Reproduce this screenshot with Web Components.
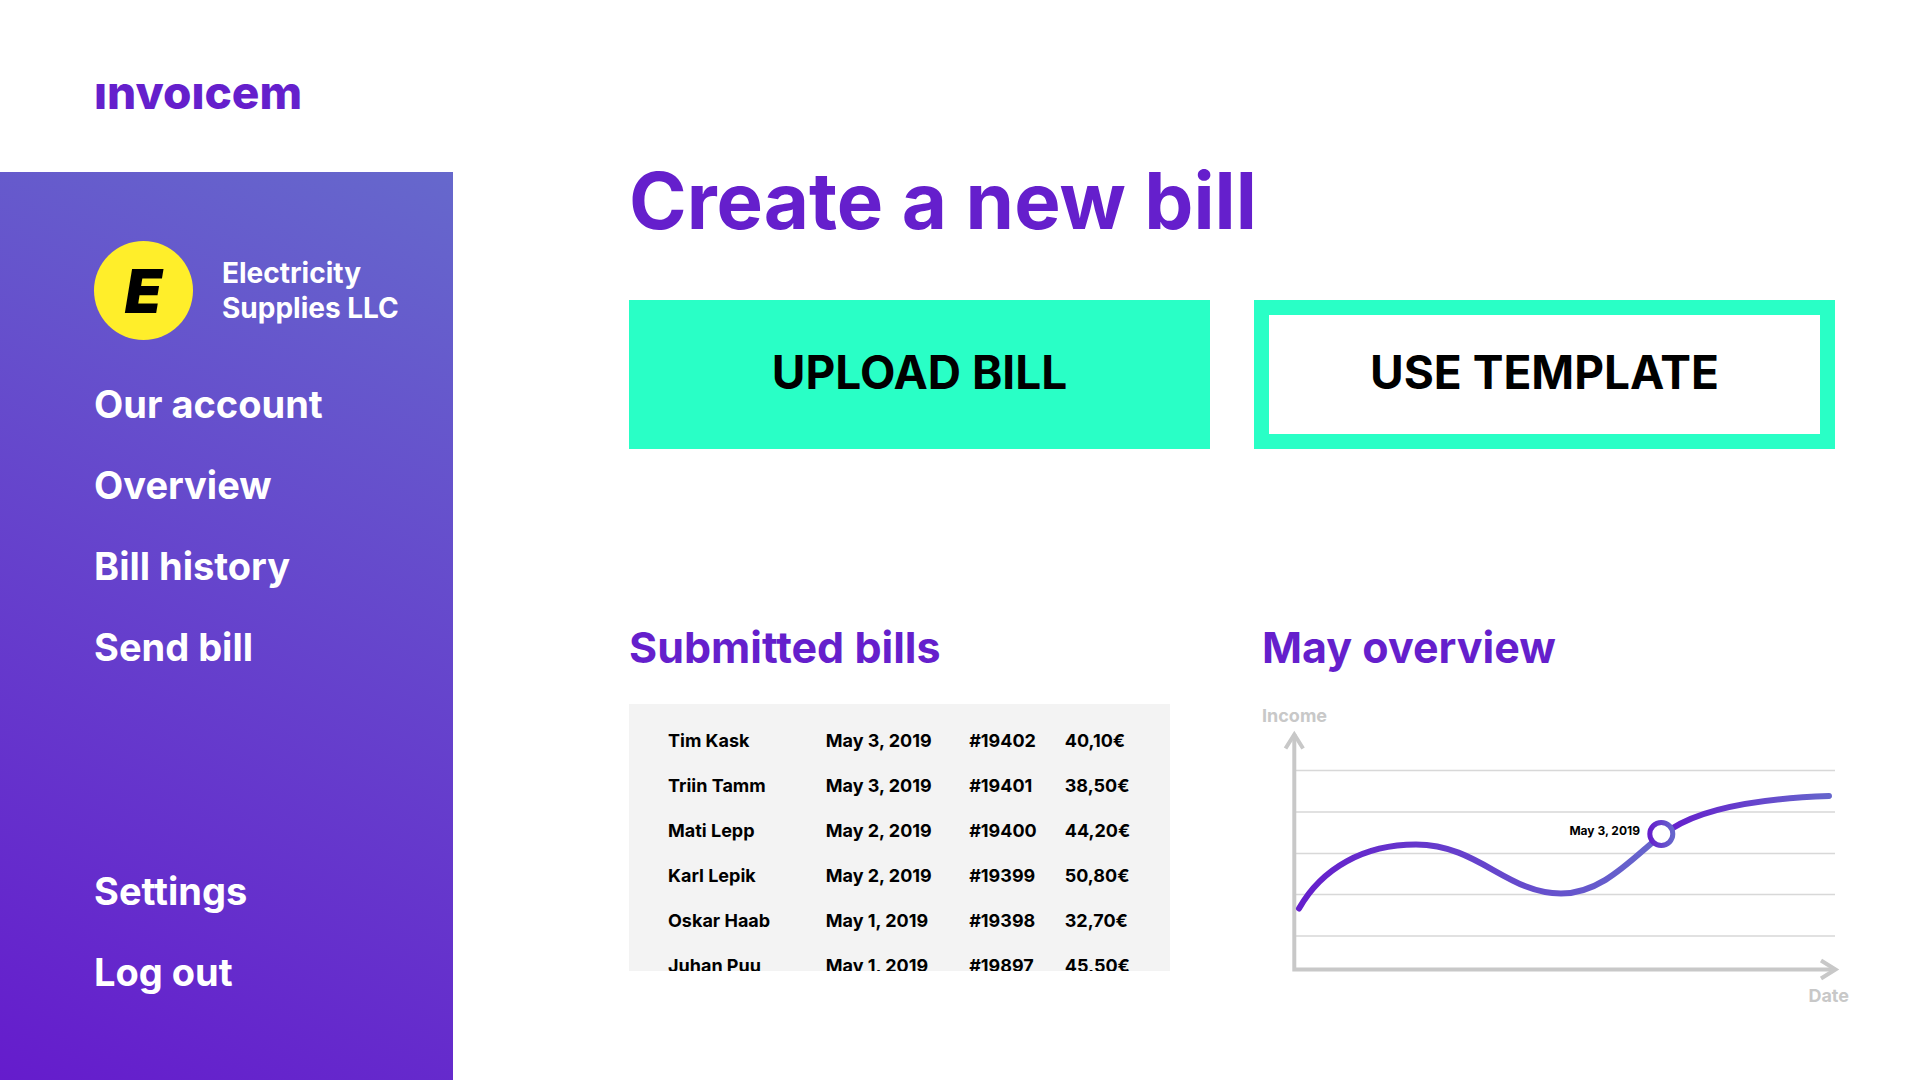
<!DOCTYPE html>
<html lang="en">
<head>
<meta charset="utf-8">
<title>invoicem</title>
<style>
  body { margin: 0; background: #fff; font-family: Inter, "Liberation Sans", sans-serif; font-weight: 700; }
</style>
</head>
<body>
<invoice-app></invoice-app>
<script>
const define = (name, html, setup) => {
  const template = document.createElement('template');
  template.innerHTML = html;
  customElements.define(name, class extends HTMLElement {
    constructor() {
      super();
      this.attachShadow({ mode: 'open' }).append(template.content.cloneNode(true));
    }
    connectedCallback() { if (setup) setup(this, this.shadowRoot); }
  });
};

define('brand-logo', `
  <style>
    :host { display: block; color: #651fcc; font-size: 46px; line-height: 56px; font-weight: 800; }
    a { color: inherit; text-decoration: none; }
  </style>
  <a href="#" aria-label="invoicem">ınvoıcem</a>`);

define('company-badge', `
  <style>
    :host { display: flex; align-items: center; gap: 29px; font-size: 28px; line-height: 35px; }
    .mark { flex: none; width: 99px; height: 99px; border-radius: 50%; background: #ffee2a; color: #000;
            display: grid; place-items: center; font-size: 60px; line-height: 60px; font-weight: 900; font-style: italic; }
  </style>
  <span class="mark"><slot name="mark"></slot></span>
  <div><slot></slot></div>`);

define('nav-item', `
  <style>
    :host { display: block; }
    a { color: inherit; text-decoration: none; font-size: 38px; line-height: 48px; white-space: nowrap; }
  </style>
  <a href="#"><slot></slot></a>`);

define('side-bar', `
  <style>
    :host { display: flex; flex-direction: column; box-sizing: border-box; padding: 69px 24px 84px 94px; color: #fff;
            background: linear-gradient(24deg, #651ccc, #6668cc); }
    nav { flex: 1; display: flex; flex-direction: column; gap: 33px; margin-top: 40px; }
    .end { margin-top: auto; }
  </style>
  <company-badge><span slot="mark">E</span>Electricity<br>Supplies LLC</company-badge>
  <nav aria-label="Main">
    <nav-item>Our account</nav-item>
    <nav-item>Overview</nav-item>
    <nav-item>Bill history</nav-item>
    <nav-item>Send bill</nav-item>
    <nav-item class="end">Settings</nav-item>
    <nav-item>Log out</nav-item>
  </nav>`);

define('action-button', `
  <style>
    :host { display: block; }
    button { display: block; width: 100%; margin: 0; padding: 28px 0 33px; border: 15px solid #29ffc6; background: #29ffc6;
             color: #000; font: inherit; font-size: 46px; line-height: 58px; white-space: nowrap; }
    :host([outline]) button { background: #fff; }
  </style>
  <button type="button"><slot></slot></button>`);

define('panel-section', `
  <style>
    :host { display: block; }
    h2 { margin: 0 0 31px; color: #651fcc; font-size: 43px; line-height: 52px; font-weight: 700; }
  </style>
  <section><h2><slot name="title"></slot></h2><slot></slot></section>`);

const bills = [
  ['Tim Kask', 'May 3, 2019', '#19402', '40,10€'],
  ['Triin Tamm', 'May 3, 2019', '#19401', '38,50€'],
  ['Mati Lepp', 'May 2, 2019', '#19400', '44,20€'],
  ['Karl Lepik', 'May 2, 2019', '#19399', '50,80€'],
  ['Oskar Haab', 'May 1, 2019', '#19398', '32,70€'],
  ['Juhan Puu', 'May 1, 2019', '#19897', '45,50€'],
];

define('bill-list', `
  <style>
    :host { display: block; box-sizing: border-box; height: 267px; overflow: hidden; padding: 14px 24px 0 39px; background: #f3f3f3; }
    table { width: 100%; table-layout: fixed; border-collapse: collapse; font-size: 18px; line-height: 45px; }
    td { padding: 0; white-space: nowrap; }
    .name { width: 33%; } .date { width: 30%; } .number { width: 20%; }
  </style>
  <table aria-label="Submitted bills">
    <colgroup><col class="name"><col class="date"><col class="number"><col></colgroup>
    <tbody></tbody>
  </table>`, (host, root) => {
  const body = root.querySelector('tbody');
  if (body.rows.length) return;
  for (const bill of bills) {
    const row = body.insertRow();
    for (const value of bill) row.insertCell().textContent = value;
  }
});

define('income-chart', `
  <style>
    :host { display: block; color: #c8c8c8; font-size: 18px; line-height: 24px; }
    svg { display: block; width: 100%; overflow: visible; }
    .x { text-align: right; margin: 2px -14px 0 0; }
    text { font-size: 12px; font-weight: 700; fill: #000; }
  </style>
  <div>Income</div>
  <svg viewBox="1262 728 573 254" role="img" aria-label="Income by date in May">
    <defs>
      <linearGradient id="rise" gradientUnits="userSpaceOnUse" x1="1299" y1="0" x2="1655" y2="0">
        <stop stop-color="#651fcc"/><stop offset="1" stop-color="#6666cc"/></linearGradient>
      <linearGradient id="end" gradientUnits="userSpaceOnUse" x1="1670" y1="0" x2="1830" y2="0">
        <stop stop-color="#651fcc"/><stop offset="1" stop-color="#6666cc"/></linearGradient>
      <linearGradient id="dot"><stop stop-color="#651fcc"/><stop offset="1" stop-color="#6666cc"/></linearGradient>
    </defs>
    <path d="M1296 770.5H1835M1296 812H1835M1296 853.5H1835M1296 894.5H1835M1296 936H1835" stroke="#d8d8d8" stroke-width="1.3"/>
    <g fill="none" stroke="#c8c8c8" stroke-width="4">
      <path d="M1294.3 734V969.5H1835"/>
      <path d="M1285.5 748.5L1294.3 734.5L1303.1 748.5M1821 960.5L1835.5 969.5L1821 978.5"/>
    </g>
    <g fill="none" stroke-width="6" stroke-linecap="round">
      <path d="M1299 908.5C1322 868 1364 844.5 1416 844.5C1478 844.5 1507 893.5 1561 893.5C1598 893.5 1625 866 1653 842" stroke="url(#rise)"/>
      <path d="M1672 828.5C1704 808 1760 798.5 1829 796" stroke="url(#end)"/>
    </g>
    <circle cx="1661.3" cy="834" r="11.5" fill="#fff" stroke="url(#dot)" stroke-width="5"/>
    <text x="1640" y="835" text-anchor="end">May 3, 2019</text>
  </svg>
  <div class="x">Date</div>`);

define('invoice-app', `
  <style>
    :host { display: grid; grid-template: 172px 1fr / 453px 1fr; min-height: 100vh; }
    header { grid-column: 1 / -1; padding: 64px 94px 0; }
    main { padding: 0 85px 0 176px; }
    h1 { margin: 0 0 71px; color: #651fcc; font-size: 78px; line-height: 57px; font-weight: 700; white-space: nowrap; }
    .pair { display: grid; grid-template-columns: 1fr 1fr; column-gap: 44px; }
    .panels { margin-top: 172px; }
    .bills { padding-right: 40px; }
    .overview { padding-left: 8px; }
  </style>
  <header><brand-logo></brand-logo></header>
  <side-bar></side-bar>
  <main>
    <h1>Create a new bill</h1>
    <div class="pair">
      <action-button>UPLOAD BILL</action-button>
      <action-button outline>USE TEMPLATE</action-button>
    </div>
    <div class="pair panels">
      <panel-section class="bills"><span slot="title">Submitted bills</span><bill-list></bill-list></panel-section>
      <panel-section class="overview"><span slot="title">May overview</span><income-chart></income-chart></panel-section>
    </div>
  </main>`);
</script>
</body>
</html>
